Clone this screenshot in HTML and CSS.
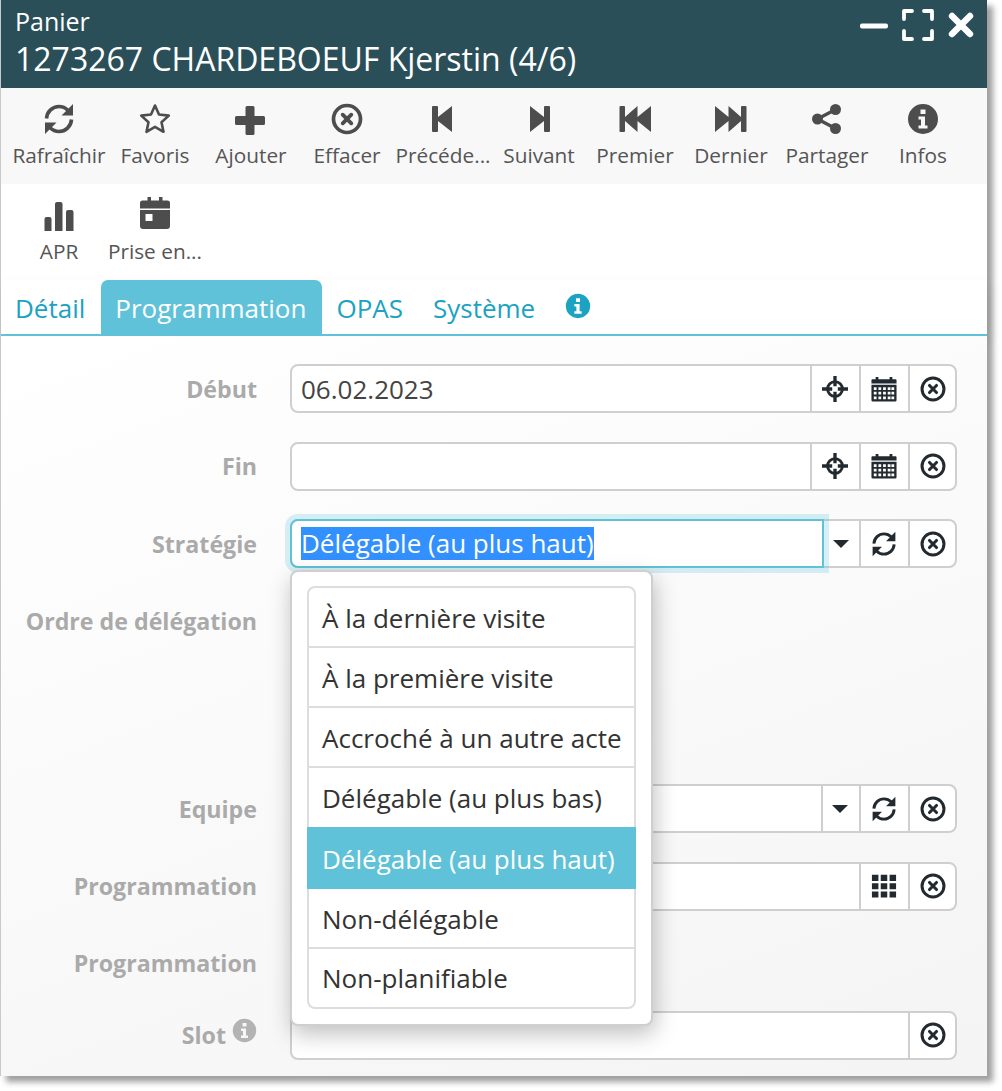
FILE: index.html
```html
<!DOCTYPE html>
<html lang="fr">
<head>
<meta charset="utf-8">
<title>Panier</title>
<link rel="stylesheet" href="styles.css">
</head>
<body>
<svg class="sprite" width="0" height="0">
  <defs>
    <symbol id="i-refresh" viewBox="0 0 32 32">
      <path d="M3.500 15.500C4 8.500 9.500 3.500 16 3.500c3.500 0 6.500 1.300 8.800 3.700M28.500 16.500C28 23.500 22.500 28.500 16 28.500c-3.500 0-6.500-1.300-8.800-3.700" fill="none" stroke="currentColor" stroke-width="3.600"/>
      <path d="M30 1v11.500H18.500zM2 31V19.500h11.500z" fill="currentColor"/>
    </symbol>
    <symbol id="i-star" viewBox="0 0 32 32">
      <path d="M16 2.500l4 9 9.800 1.100-7.300 6.600 2 9.600-8.500-4.900-8.500 4.900 2-9.600-7.300-6.600 9.800-1.100z" fill="none" stroke="currentColor" stroke-width="2.600" stroke-linejoin="round"/>
    </symbol>
    <symbol id="i-plus" viewBox="0 0 32 32">
      <path d="M12 3h6a1.500 1.500 0 0 1 1.500 1.500V13h9a1.500 1.500 0 0 1 1.500 1.500v6a1.500 1.500 0 0 1-1.500 1.500h-9v8.500a1.500 1.500 0 0 1-1.500 1.500h-6a1.500 1.500 0 0 1-1.500-1.500V22h-9A1.500 1.500 0 0 1 0 20.500v-6A1.500 1.500 0 0 1 1.500 13h9V4.500A1.500 1.500 0 0 1 12 3z" fill="currentColor"/>
    </symbol>
    <symbol id="i-clear" viewBox="0 0 32 32">
      <circle cx="16" cy="16" r="13.500" fill="none" stroke="currentColor" stroke-width="3.700"/>
      <path d="M11.700 11.700l8.600 8.600M20.300 11.700l-8.600 8.600" fill="none" stroke="currentColor" stroke-width="3.800" stroke-linecap="round"/>
    </symbol>
    <symbol id="i-prev" viewBox="0 0 32 32">
      <path d="M6 3h4a1 1 0 0 1 1 1v10L25 3v26L11 18v10a1 1 0 0 1-1 1H6a1 1 0 0 1-1-1V4a1 1 0 0 1 1-1z" fill="currentColor"/>
    </symbol>
    <symbol id="i-next" viewBox="0 0 32 32">
      <path d="M26 3h-4a1 1 0 0 0-1 1v10L7 3v26l14-11v10a1 1 0 0 0 1 1h4a1 1 0 0 0 1-1V4a1 1 0 0 0-1-1z" fill="currentColor"/>
    </symbol>
    <symbol id="i-first" viewBox="0 0 32 32">
      <path d="M1.500 3h3.500a1 1 0 0 1 1 1v10L18.500 3v11L32 3v26L18.500 18v11L6 18v10a1 1 0 0 1-1 1H1.500a1 1 0 0 1-1-1V4a1 1 0 0 1 1-1z" fill="currentColor"/>
    </symbol>
    <symbol id="i-last" viewBox="0 0 32 32">
      <path d="M30.500 3H27a1 1 0 0 0-1 1v10L13.500 3v11L0 3v26l13.500-11v11L26 18v10a1 1 0 0 0 1 1h3.500a1 1 0 0 0 1-1V4a1 1 0 0 0-1-1z" fill="currentColor"/>
    </symbol>
    <symbol id="i-share" viewBox="0 0 32 32">
      <circle cx="24.500" cy="6.500" r="5.500" fill="currentColor"/>
      <circle cx="24.500" cy="25.500" r="5.500" fill="currentColor"/>
      <circle cx="6.500" cy="16" r="5.500" fill="currentColor"/>
      <path d="M24.500 6.500L6.500 16l18 9.500" fill="none" stroke="currentColor" stroke-width="3.400"/>
    </symbol>
    <symbol id="i-info" viewBox="0 0 32 32">
      <path fill-rule="evenodd" d="M16 1a15 15 0 1 1 0 30 15 15 0 0 1 0-30zM13.500 6.500v4.500h5V6.500zM11.500 13.500v3h2.500v6h-2.500v3h9v-3H18v-9z" fill="currentColor"/>
    </symbol>
    <symbol id="i-bars" viewBox="0 0 32 32">
      <path d="M3.500 18h3a2 2 0 0 1 2 2v12h-7V20a2 2 0 0 1 2-2zM14 3h3.500a2 2 0 0 1 2 2v27H12V5a2 2 0 0 1 2-2zM25 11h3.500a2 2 0 0 1 2 2v19H23V13a2 2 0 0 1 2-2z" fill="currentColor"/>
    </symbol>
    <symbol id="i-cal-solid" viewBox="0 0 32 32">
      <path fill-rule="evenodd" d="M8.500 0h3.500v3.500h8V0h3.500v3.500h5a2.500 2.500 0 0 1 2.500 2.500v5.500H1V6a2.500 2.500 0 0 1 2.500-2.500h5zM1 13h30v16a3 3 0 0 1-3 3H4a3 3 0 0 1-3-3zM6.500 17v7h7v-7z" fill="currentColor"/>
    </symbol>
    <symbol id="i-cal-grid" viewBox="0 0 28 28">
      <path fill-rule="evenodd" d="M5 1h3v2.500h12V1h3v2.500h3.500a1 1 0 0 1 1 1V8H.5V4.500a1 1 0 0 1 1-1H5zM.5 9.500h27V26a1.500 1.500 0 0 1-1.500 1.500H2A1.500 1.500 0 0 1 .5 26zM3 12v3h3v-3zm5 0v3h3v-3zm5 0v3h3v-3zm5 0v3h3v-3zm4 0v3h3v-3zM3 17v3h3v-3zm5 0v3h3v-3zm5 0v3h3v-3zm5 0v3h3v-3zm4 0v3h3v-3zM3 22v3h3v-3zm5 0v3h3v-3zm5 0v3h3v-3zm5 0v3h3v-3zm4 0v3h3v-3z" fill="currentColor"/>
    </symbol>
    <symbol id="i-target" viewBox="0 0 28 28">
      <circle cx="14" cy="14" r="8" fill="none" stroke="currentColor" stroke-width="3"/>
      <path d="M14 0v11M14 17v11M0 14h11M17 14h11" fill="none" stroke="currentColor" stroke-width="3.600"/>
    </symbol>
    <symbol id="i-grid" viewBox="0 0 28 28">
      <path d="M1 2h7v6.500H1zM10.500 2h7v6.500h-7zM20 2h7v6.500h-7zM1 11h7v6.500H1zM10.500 11h7v6.500h-7zM20 11h7v6.500h-7zM1 20h7v6.500H1zM10.500 20h7v6.500h-7zM20 20h7v6.500h-7z" fill="currentColor"/>
    </symbol>
    <symbol id="i-min" viewBox="0 0 28 6">
      <rect x="0" y="0.500" width="28" height="5" rx="2" fill="currentColor"/>
    </symbol>
    <symbol id="i-expand" viewBox="0 0 32 32">
      <path d="M10 2H2v8M22 2h8v8M10 30H2v-8M22 30h8v-8" fill="none" stroke="currentColor" stroke-width="3.800" stroke-linejoin="round" stroke-linecap="round"/>
    </symbol>
    <symbol id="i-close" viewBox="0 0 26 26">
      <path d="M4 4l18 18M22 4L4 22" fill="none" stroke="currentColor" stroke-width="6.400" stroke-linecap="round"/>
    </symbol>
  </defs>
</svg>

<main class="window">
  <header class="titlebar">
    <div class="titles">
      <div class="title-small">Panier</div>
      <div class="title-main">1273267 CHARDEBOEUF Kjerstin (4/6)</div>
    </div>
    <div class="controls">
      <svg class="ctl-min"><use href="#i-min"/></svg>
      <svg class="ctl-expand"><use href="#i-expand"/></svg>
      <svg class="ctl-close"><use href="#i-close"/></svg>
    </div>
  </header>

  <nav class="toolbar toolbar-grey">
    <div class="tool"><svg class="tool-icon"><use href="#i-refresh"/></svg><span>Rafraîchir</span></div>
    <div class="tool"><svg class="tool-icon"><use href="#i-star"/></svg><span>Favoris</span></div>
    <div class="tool"><svg class="tool-icon"><use href="#i-plus"/></svg><span>Ajouter</span></div>
    <div class="tool"><svg class="tool-icon"><use href="#i-clear"/></svg><span>Effacer</span></div>
    <div class="tool"><svg class="tool-icon"><use href="#i-prev"/></svg><span>Précéde...</span></div>
    <div class="tool"><svg class="tool-icon"><use href="#i-next"/></svg><span>Suivant</span></div>
    <div class="tool"><svg class="tool-icon"><use href="#i-first"/></svg><span>Premier</span></div>
    <div class="tool"><svg class="tool-icon"><use href="#i-last"/></svg><span>Dernier</span></div>
    <div class="tool"><svg class="tool-icon"><use href="#i-share"/></svg><span>Partager</span></div>
    <div class="tool"><svg class="tool-icon"><use href="#i-info"/></svg><span>Infos</span></div>
  </nav>
  <nav class="toolbar toolbar-white">
    <div class="tool"><svg class="tool-icon"><use href="#i-bars"/></svg><span>APR</span></div>
    <div class="tool"><svg class="tool-icon icon-up"><use href="#i-cal-solid"/></svg><span>Prise en...</span></div>
  </nav>

  <div class="tabs">
    <div class="tab">Détail</div>
    <div class="tab tab-active">Programmation</div>
    <div class="tab">OPAS</div>
    <div class="tab">Système</div>
    <div class="tab"><svg class="tab-icon"><use href="#i-info"/></svg></div>
  </div>

  <section class="form">
    <div class="row">
      <label class="label">Début</label>
      <div class="group">
        <div class="field">06.02.2023</div>
        <div class="btn"><svg class="btn-icon"><use href="#i-target"/></svg></div>
        <div class="btn"><svg class="btn-icon"><use href="#i-cal-grid"/></svg></div>
        <div class="btn"><svg class="btn-icon"><use href="#i-clear"/></svg></div>
      </div>
    </div>
    <div class="row">
      <label class="label">Fin</label>
      <div class="group">
        <div class="field"></div>
        <div class="btn"><svg class="btn-icon"><use href="#i-target"/></svg></div>
        <div class="btn"><svg class="btn-icon"><use href="#i-cal-grid"/></svg></div>
        <div class="btn"><svg class="btn-icon"><use href="#i-clear"/></svg></div>
      </div>
    </div>
    <div class="row">
      <label class="label">Stratégie</label>
      <div class="group">
        <div class="field field-focus"><span class="selected">Délégable (au plus haut)</span></div>
        <div class="drop drop-plain"><span class="caret"></span></div>
        <div class="btn"><svg class="btn-icon"><use href="#i-refresh"/></svg></div>
        <div class="btn"><svg class="btn-icon"><use href="#i-clear"/></svg></div>
      </div>
    </div>
    <div class="row row-tall">
      <label class="label">Ordre de délégation</label>
    </div>
    <div class="row">
      <label class="label">Equipe</label>
      <div class="group">
        <div class="field"></div>
        <div class="drop"><span class="caret"></span></div>
        <div class="btn"><svg class="btn-icon"><use href="#i-refresh"/></svg></div>
        <div class="btn"><svg class="btn-icon"><use href="#i-clear"/></svg></div>
      </div>
    </div>
    <div class="row">
      <label class="label">Programmation</label>
      <div class="group">
        <div class="field"></div>
        <div class="btn"><svg class="btn-icon"><use href="#i-grid"/></svg></div>
        <div class="btn"><svg class="btn-icon"><use href="#i-clear"/></svg></div>
      </div>
    </div>
    <div class="row row-short">
      <label class="label">Programmation</label>
    </div>
    <div class="row row-last">
      <label class="label">Slot <svg class="label-icon"><use href="#i-info"/></svg></label>
      <div class="group">
        <div class="field"></div>
        <div class="btn"><svg class="btn-icon"><use href="#i-clear"/></svg></div>
      </div>
    </div>

    <div class="popup">
      <ul class="list">
        <li class="item">À la dernière visite</li>
        <li class="item">À la première visite</li>
        <li class="item">Accroché à un autre acte</li>
        <li class="item">Délégable (au plus bas)</li>
        <li class="item item-active">Délégable (au plus haut)</li>
        <li class="item">Non-délégable</li>
        <li class="item">Non-planifiable</li>
      </ul>
    </div>
  </section>
</main>
</body>
</html>
```
FILE: styles.css
```css
* { box-sizing: border-box; }

html, body { margin: 0; padding: 0; background: #fff; }

body {
  width: 1002px;
  height: 1091px;
  overflow: hidden;
  font-family: "Open Sans", "Liberation Sans", sans-serif;
}

.sprite { display: block; width: 0; height: 0; }

.window {
  width: 987px;
  height: 1076px;
  border-left: 1px solid #c9c9c9;
  background: #fafafa;
  box-shadow: 6px 6px 6px rgba(0, 0, 0, 0.38);
  display: flex;
  flex-direction: column;
}

.titlebar {
  height: 88px;
  flex: none;
  background: #2a4f59;
  color: #fff;
  display: flex;
  justify-content: space-between;
  padding: 0 13px 0 14px;
}

.title-small { font-size: 25px; line-height: 34px; margin-top: 4px; }
.title-main { font-size: 32px; line-height: 40px; margin-top: 1px; }

.controls { display: flex; align-items: center; height: 50px; color: #fff; }
.ctl-min { width: 28px; height: 6px; margin-top: 1px; }
.ctl-expand { width: 32px; height: 32px; margin-left: 14px; }
.ctl-close { width: 26px; height: 26px; margin-left: 14px; }

.toolbar {
  height: 96px;
  flex: none;
  display: flex;
  padding: 15px 0 0 10px;
}
.toolbar-grey { background: #f8f8f8; }
.toolbar-white { background: #fff; }

.tool {
  width: 96px;
  display: flex;
  flex-direction: column;
  align-items: center;
  color: #4d4d4d;
  font-size: 20.8px;
  line-height: 28px;
  white-space: nowrap;
}
.tool span { margin-top: 6px; color: #555; }
.tool-icon { width: 32px; height: 32px; flex: none; }
.icon-up { margin: -2px 0 2px; }

.tabs {
  height: 56px;
  flex: none;
  display: flex;
  align-items: stretch;
  background: #fff;
  border-bottom: 2px solid #5fc2d8;
  box-shadow: 0 6px 14px rgba(0, 0, 0, 0.07);
  position: relative;
  color: #1ba3c1;
  font-size: 26px;
}
.tab {
  padding: 2px 16px 0 14px;
  display: flex;
  align-items: center;
  line-height: 50px;
}
.tab-active {
  background: #5fc2d8;
  color: #fff;
  border-radius: 7px 7px 0 0;
}
.tab-icon { width: 26px; height: 26px; margin-bottom: 4px; }

.form {
  position: relative;
  flex: 1;
  padding-top: 28px;
  background: linear-gradient(160deg, #fff 0%, #f4f4f4 100%);
}

.row {
  display: flex;
  align-items: center;
  height: 49px;
  margin-bottom: 28.5px;
}
.row-tall { align-items: flex-start; height: 159px; padding-top: 6px; }
.row-short { align-items: flex-start; height: 71.5px; margin-bottom: 0; padding-top: 6px; }
.row-last { margin-bottom: 0; }

.label {
  width: 256px;
  flex: none;
  text-align: right;
  font-size: 23.2px;
  font-weight: 700;
  line-height: 36px;
  color: #aaa;
  white-space: nowrap;
}
.label-icon { width: 25px; height: 25px; vertical-align: 1px; color: #b3b3b3; }

.group {
  width: 667px;
  height: 49px;
  margin-left: 33px;
  display: flex;
  background: #fff;
  border: 2px solid #cfcfcf;
  border-radius: 8px;
}

.field {
  flex: 1;
  min-width: 0;
  padding-left: 9px;
  font-size: 26px;
  line-height: 47px;
  color: #444;
  white-space: nowrap;
}

.field-focus {
  margin: -2px 0 -2px -2px;
  padding-left: 9px;
  background: #fff;
  border: 2px solid #5fc2d8;
  border-radius: 8px 0 0 8px;
  box-shadow: 0 0 0 5px rgba(95, 194, 216, 0.25);
  line-height: 45px;
}

.selected { background: #3390ff; color: #fff; display: inline-block; line-height: 33px; }

.btn, .drop {
  flex: none;
  display: flex;
  align-items: center;
  justify-content: center;
  border-left: 2px solid #cfcfcf;
  color: #222a30;
}
.btn { width: 49px; padding-right: 2px; }
.btn:last-child { width: 47px; padding-right: 0; }
.drop { width: 38px; padding-right: 2px; }
.drop-plain { width: 35px; border-left: 0; }

.btn-icon { width: 26px; height: 26px; }

.caret {
  width: 0;
  height: 0;
  border-left: 8px solid transparent;
  border-right: 8px solid transparent;
  border-top: 8px solid #222a30;
}

.popup {
  position: absolute;
  left: 289px;
  top: 234px;
  width: 363px;
  height: 456px;
  padding: 14px 15px;
  background: #fff;
  border: 2px solid #cfcfcf;
  border-radius: 8px;
  box-shadow: 2px 8px 22px rgba(0, 0, 0, 0.25);
}

.list {
  list-style: none;
  margin: 0;
  padding: 0;
  height: 423px;
  display: flex;
  flex-direction: column;
  border: 2px solid #ddd;
  border-radius: 8px;
}

.item {
  flex: none;
  height: 60.14px;
  display: flex;
  align-items: center;
  padding-left: 13px;
  font-size: 26px;
  color: #333;
  white-space: nowrap;
  box-shadow: inset 0 -2px #ddd;
}
.item:last-child { flex: 1; height: auto; box-shadow: none; }
.item-active {
  height: 62.14px;
  margin: -2px -2px 0;
  padding: 2px 0 0 15px;
  background: #5fc2d8;
  color: #fff;
  box-shadow: none;
}
```
